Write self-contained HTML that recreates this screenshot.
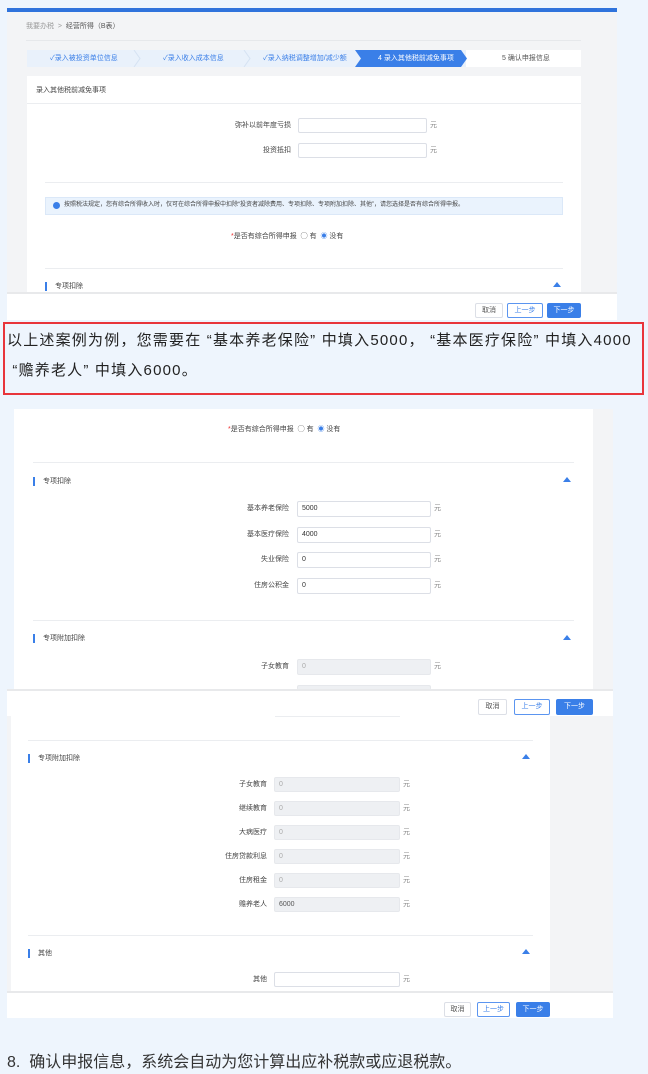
<!DOCTYPE html>
<html><head><meta charset="utf-8"><style>
*{margin:0;padding:0;box-sizing:border-box}
body{width:648px;height:1067px;background:#eef5fd;position:relative;overflow:hidden;font-family:"Liberation Sans","Noto Sans CJK SC",sans-serif;color:#333}
.a{position:absolute}
.g{background:#f3f4f6}
.w{background:#fff}
.t{position:absolute;font-size:7px;color:#444;white-space:nowrap;line-height:9px}
.lab{position:absolute;font-size:7px;color:#444;text-align:right;white-space:nowrap;line-height:15px}
.in{position:absolute;background:#fff;border:1px solid #dcdfe6;border-radius:2px;font-size:7px;line-height:13px;padding-left:4px;color:#333}
.dis{background:#eef0f3;border-color:#e6e8ec;color:#aaa}
.yuan{position:absolute;font-size:7px;color:#888;line-height:15px}
.hr{position:absolute;height:1px;background:#ebedf0}
.sec{position:absolute;font-size:7px;color:#444;line-height:9px;padding-left:8px;border-left:2px solid #3a7fe8}
.caret{position:absolute;width:0;height:0;border-left:4px solid transparent;border-right:4px solid transparent;border-bottom:5px solid #3a7fe8}
.btn{position:absolute;font-size:7px;text-align:center;border:1px solid #dcdfe6;background:#fff;color:#555;border-radius:2px}
.prev{border-color:#5b95f0;color:#3a7fe8}
.next{background:#3a7fe8;border-color:#3a7fe8;color:#fff}
</style></head><body>

<!-- image 1 -->
<div class="a g" style="left:7px;top:8px;width:610px;height:284px"></div>
<div class="a" style="left:7px;top:8px;width:610px;height:4px;background:#2f73dc"></div>
<div class="t" style="left:26px;top:22px;color:#999">我要办税 &nbsp;&gt; &nbsp;<span style="color:#555">经营所得（B表）</span></div>
<div class="hr" style="left:26px;top:40px;width:555px;background:#e6e8eb"></div>
<div class="a" style="left:27px;top:50px;width:554px;height:17px;background:#e9f1fb"></div>
<div class="a" style="left:466px;top:50px;width:115px;height:17px;background:#fff"></div>
<svg class="a" style="left:27px;top:50px" width="554" height="17">
<polyline points="107,0 113,8.5 107,17" fill="none" stroke="#d5e2f2"/>
<polyline points="217,0 223,8.5 217,17" fill="none" stroke="#d5e2f2"/>
<polygon points="328,0 434,0 440,8.5 434,17 328,17 334,8.5" fill="#3a7fe8"/>
</svg>
<div class="t" style="left:50px;top:54px;color:#3a7fe8">✓录入被投资单位信息</div>
<div class="t" style="left:163px;top:54px;color:#3a7fe8">✓录入收入成本信息</div>
<div class="t" style="left:263px;top:54px;color:#3a7fe8">✓录入纳税调整增加/减少额</div>
<div class="t" style="left:378px;top:54px;color:#fff">4 录入其他税前减免事项</div>
<div class="t" style="left:502px;top:54px;color:#555">5 确认申报信息</div>
<div class="a w" style="left:27px;top:76px;width:554px;height:216px"></div>
<div class="t" style="left:36px;top:86px">录入其他税前减免事项</div>
<div class="hr" style="left:27px;top:103px;width:554px"></div>
<div class="lab" style="right:357px;top:118px">弥补以前年度亏损</div>
<div class="in" style="left:298px;top:118px;width:129px;height:15px"></div>
<div class="yuan" style="left:430px;top:118px">元</div>
<div class="lab" style="right:357px;top:143px">投资抵扣</div>
<div class="in" style="left:298px;top:143px;width:129px;height:15px"></div>
<div class="yuan" style="left:430px;top:143px">元</div>
<div class="hr" style="left:45px;top:182px;width:518px"></div>
<div class="a" style="left:45px;top:197px;width:518px;height:18px;background:#eaf3fd;border:1px solid #dbe8f8"></div>
<div class="a" style="left:53px;top:202px;width:7px;height:7px;border-radius:50%;background:#3a7fe8"></div>
<div class="t" style="left:64px;top:201px;font-size:6px">按照税法规定，您有综合所得收入时，仅可在综合所得申报中扣除“投资者减除费用、专项扣除、专项附加扣除、其他”，请您选择是否有综合所得申报。</div>
<div class="t" style="left:231px;top:232px"><span style="color:#e33">*</span>是否有综合所得申报 &nbsp;◯ 有 &nbsp;<span style="color:#3a7fe8">◉</span> 没有</div>
<div class="hr" style="left:45px;top:268px;width:518px"></div>
<div class="sec" style="left:45px;top:282px">专项扣除</div>
<div class="caret" style="left:553px;top:282px"></div>
<div class="a w" style="left:7px;top:292px;width:610px;height:28px;border-top:2px solid #e8e9eb"></div>
<div class="btn" style="left:475px;top:303px;width:28px;height:15px;line-height:13px">取消</div>
<div class="btn prev" style="left:507px;top:303px;width:36px;height:15px;line-height:13px">上一步</div>
<div class="btn next" style="left:547px;top:303px;width:34px;height:15px;line-height:13px">下一步</div>

<!-- red box -->
<div class="a" style="left:3px;top:322px;width:641px;height:73px;border:2px solid #e8353b"></div>
<div class="a" style="left:7px;top:326px;font-size:15px;line-height:30px;color:#222;white-space:nowrap;letter-spacing:1.2px">以上述案例为例，您需要在 “基本养老保险” 中填入5000， “基本医疗保险” 中填入4000<br>&nbsp;“赡养老人” 中填入6000。</div>

<!-- image 2 -->
<div class="a g" style="left:14px;top:409px;width:599px;height:281px"></div>
<div class="a w" style="left:14px;top:409px;width:579px;height:281px"></div>
<div class="t" style="left:228px;top:425px"><span style="color:#e33">*</span>是否有综合所得申报 &nbsp;◯ 有 &nbsp;<span style="color:#3a7fe8">◉</span> 没有</div>
<div class="hr" style="left:33px;top:462px;width:541px"></div>
<div class="sec" style="left:33px;top:477px">专项扣除</div>
<div class="caret" style="left:563px;top:477px"></div>
<div class="lab" style="right:359px;top:501px">基本养老保险</div>
<div class="in" style="left:297px;top:501px;width:134px;height:16px">5000</div>
<div class="yuan" style="left:434px;top:501px">元</div>
<div class="lab" style="right:359px;top:527px">基本医疗保险</div>
<div class="in" style="left:297px;top:527px;width:134px;height:16px">4000</div>
<div class="yuan" style="left:434px;top:527px">元</div>
<div class="lab" style="right:359px;top:552px">失业保险</div>
<div class="in" style="left:297px;top:552px;width:134px;height:16px">0</div>
<div class="yuan" style="left:434px;top:552px">元</div>
<div class="lab" style="right:359px;top:578px">住房公积金</div>
<div class="in" style="left:297px;top:578px;width:134px;height:16px">0</div>
<div class="yuan" style="left:434px;top:578px">元</div>
<div class="hr" style="left:33px;top:620px;width:541px"></div>
<div class="sec" style="left:33px;top:634px">专项附加扣除</div>
<div class="caret" style="left:563px;top:635px"></div>
<div class="lab" style="right:359px;top:659px">子女教育</div>
<div class="in dis" style="left:297px;top:659px;width:134px;height:16px">0</div>
<div class="yuan" style="left:434px;top:659px">元</div>
<div class="in dis" style="left:297px;top:685px;width:134px;height:5px;border-bottom:none"></div>
<div class="a w" style="left:7px;top:689px;width:606px;height:27px;border-top:2px solid #e8e9eb"></div>
<div class="btn" style="left:478px;top:699px;width:29px;height:16px;line-height:14px">取消</div>
<div class="btn prev" style="left:514px;top:699px;width:36px;height:16px;line-height:14px">上一步</div>
<div class="btn next" style="left:556px;top:699px;width:37px;height:16px;line-height:14px">下一步</div>

<!-- image 3 -->
<div class="a g" style="left:7px;top:716px;width:606px;height:276px"></div>
<div class="a w" style="left:11px;top:716px;width:539px;height:276px"></div>
<div class="hr" style="left:275px;top:716px;width:125px"></div>
<div class="hr" style="left:28px;top:740px;width:505px"></div>
<div class="sec" style="left:28px;top:754px">专项附加扣除</div>
<div class="caret" style="left:522px;top:754px"></div>
<div class="lab" style="right:381px;top:777px">子女教育</div><div class="in dis" style="left:274px;top:777px;width:126px;height:15px">0</div><div class="yuan" style="left:403px;top:777px">元</div>
<div class="lab" style="right:381px;top:801px">继续教育</div><div class="in dis" style="left:274px;top:801px;width:126px;height:15px">0</div><div class="yuan" style="left:403px;top:801px">元</div>
<div class="lab" style="right:381px;top:825px">大病医疗</div><div class="in dis" style="left:274px;top:825px;width:126px;height:15px">0</div><div class="yuan" style="left:403px;top:825px">元</div>
<div class="lab" style="right:381px;top:849px">住房贷款利息</div><div class="in dis" style="left:274px;top:849px;width:126px;height:15px">0</div><div class="yuan" style="left:403px;top:849px">元</div>
<div class="lab" style="right:381px;top:873px">住房租金</div><div class="in dis" style="left:274px;top:873px;width:126px;height:15px">0</div><div class="yuan" style="left:403px;top:873px">元</div>
<div class="lab" style="right:381px;top:897px">赡养老人</div><div class="in dis" style="left:274px;top:897px;width:126px;height:15px;color:#555">6000</div><div class="yuan" style="left:403px;top:897px">元</div>
<div class="hr" style="left:28px;top:935px;width:505px"></div>
<div class="sec" style="left:28px;top:949px">其他</div>
<div class="caret" style="left:522px;top:949px"></div>
<div class="lab" style="right:381px;top:972px">其他</div><div class="in" style="left:274px;top:972px;width:126px;height:15px"></div><div class="yuan" style="left:403px;top:972px">元</div>
<div class="a w" style="left:7px;top:991px;width:606px;height:27px;border-top:2px solid #e8e9eb"></div>
<div class="btn" style="left:444px;top:1002px;width:27px;height:15px;line-height:13px">取消</div>
<div class="btn prev" style="left:477px;top:1002px;width:33px;height:15px;line-height:13px">上一步</div>
<div class="btn next" style="left:516px;top:1002px;width:34px;height:15px;line-height:13px">下一步</div>

<div class="a" style="left:7px;top:1052px;font-size:16px;line-height:22px;color:#333;white-space:nowrap">8.&nbsp; 确认申报信息，系统会自动为您计算出应补税款或应退税款。</div>
</body></html>
